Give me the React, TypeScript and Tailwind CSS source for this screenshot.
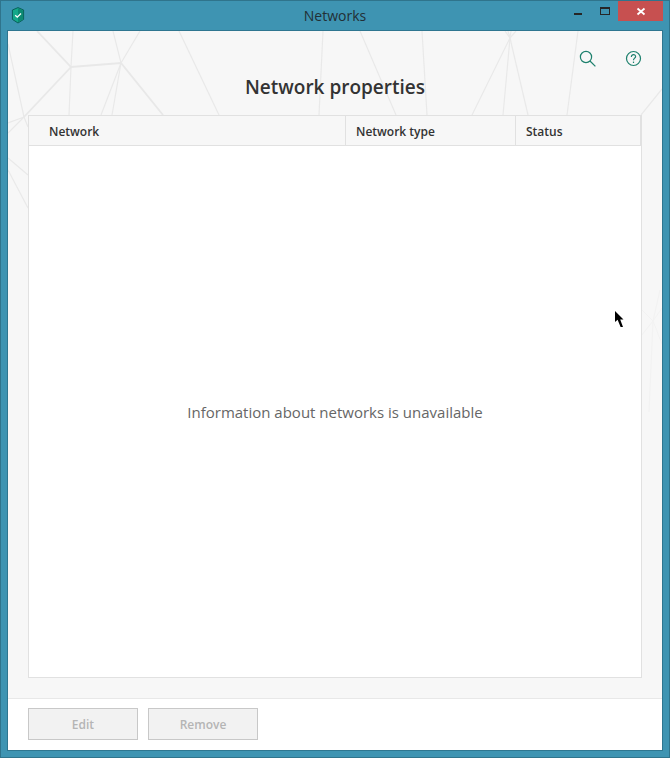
import React from 'react';

const thinLines = [
  'M65 0 L63 36 L61 84',
  'M105 0 L113 32 L132 0',
  'M93 84 L113 32 L104 84',
  'M171 0 L211 84',
  'M0 13 L16 86 L20 96',
  'M0 102 L16 86 L0 92',
  'M0 127 L20 144',
  'M0 139 L20 177',
  'M315 0 L311 84',
  'M352 0 L388 84',
  'M414 0 L419 84',
  'M497 0 L502 7 L508 0',
  'M500 0 L502 7 L503 0',
  'M464 84 L502 7 L495 84',
  'M502 7 L520 84',
  'M570 0 L559 84',
  'M654 58 L633 84',
];

const thickLines = ['M29 0 L63 36 L113 32 L155 84', 'M63 36 L16 86'];

const faintLines = ['M652 259 L645 290 L641 381', 'M633 278 L645 290 L654 277', 'M633 305 L645 290 L654 313'];

const Backdrop = () => (
  <svg
    className="absolute inset-0 h-full w-full"
    viewBox="0 0 654 667"
    preserveAspectRatio="xMinYMin slice"
    fill="none"
    aria-hidden="true"
  >
    <g stroke="#e9e9e9" strokeWidth="1.2">
      {thinLines.map((d) => (
        <path key={d} d={d} />
      ))}
    </g>
    <g stroke="#e8e8e8" strokeWidth="1.8">
      {thickLines.map((d) => (
        <path key={d} d={d} />
      ))}
    </g>
    <g stroke="#f2f2f2">
      {faintLines.map((d) => (
        <path key={d} d={d} />
      ))}
    </g>
  </svg>
);

const TitleBar = () => (
  <header className="grid h-[29px] grid-cols-[1fr_auto_1fr] items-start">
    <svg className="ml-[10px] mt-[6px]" width="14" height="17" viewBox="0 0 14 17" aria-hidden="true">
      <path d="M7 .6 L12.6 3 V12.4 L7 16 L1.4 12.4 V3 Z" fill="#14a88a" stroke="#0a5f5a" />
      <path d="M7 1.2 L12.1 3.4 V12.1 L7 15.4 Z" fill="#0c8a73" />
      <path d="M4.2 8.2 L6.3 10.2 L10 6.5" fill="none" stroke="#fff" strokeWidth="1.3" />
    </svg>
    <h2 className="pt-1 text-[14px] leading-[21px] text-[#222f35]">Networks</h2>
    <div className="mr-[6px] flex justify-end">
      <button type="button" aria-label="Minimize" className="h-5 w-[26px]">
        <svg width="26" height="20" shapeRendering="crispEdges">
          <path d="M8 12h8v2H8z" fill="#262626" />
        </svg>
      </button>
      <button type="button" aria-label="Maximize" className="h-5 w-[26px]">
        <svg width="26" height="20" shapeRendering="crispEdges">
          <path fillRule="evenodd" d="M8 6h10v8H8z M9 8v5h8V8z" fill="#262626" />
        </svg>
      </button>
      <button type="button" aria-label="Close" className="h-5 w-[45px] bg-[#c75050]">
        <svg width="45" height="20">
          <path d="M19.5 7.5 L26.5 13.5 M26.5 7.5 L19.5 13.5" stroke="#fff" strokeWidth="1.8" />
        </svg>
      </button>
    </div>
  </header>
);

const Toolbar = () => (
  <div className="flex h-11 items-end justify-end gap-7 pr-5 pb-[7px]">
    <button type="button" aria-label="Search" className="text-[#1d806d]">
      <svg width="18" height="18" viewBox="0 0 18 18" fill="none" stroke="currentColor" strokeWidth="1.2">
        <circle cx="8" cy="7" r="5.6" />
        <path d="M12 11 L17.4 16.4" />
      </svg>
    </button>
    <button type="button" aria-label="Help" className="text-[#1d806d]">
      <svg width="18" height="18" viewBox="0 0 18 18" fill="none" stroke="currentColor" strokeWidth="1.2">
        <circle cx="9.5" cy="8.5" r="7" />
        <path d="M7.4 7 C7.2 3.8 11.8 4 11.6 6.6 C11.5 8.2 9.5 8.2 9.5 10.3" />
        <path d="M9.5 11.6v1.4" />
      </svg>
    </button>
  </div>
);

const NetworkTable = () => (
  <div className="flex flex-1 flex-col border border-[#e1e1e1] bg-white">
    <table className="w-full table-fixed border-separate border-spacing-0 text-left text-[12px] leading-4 text-[#333]">
      <colgroup>
        <col />
        <col className="w-[170px]" />
        <col className="w-[125px]" />
      </colgroup>
      <thead>
        <tr className="h-[30px] bg-[#f7f7f7]">
          <th scope="col" className="border-r border-b border-[#e1e1e1] pt-[2px] pl-5 font-semibold">Network</th>
          <th scope="col" className="border-r border-b border-[#e1e1e1] pt-[2px] pl-[10px] font-semibold">Network type</th>
          <th scope="col" className="border-r border-b border-[#e1e1e1] pt-[2px] pl-[10px] font-semibold">Status</th>
        </tr>
      </thead>
    </table>
    <div className="flex flex-1 items-center justify-center">
      <p className="text-[15px] leading-5 text-[#666]">Information about networks is unavailable</p>
    </div>
  </div>
);

const footerButton =
  'h-8 w-[110px] border border-[#c8c8c8] bg-[#f2f2f2] pt-[2px] text-[12px] leading-4 font-semibold text-[#b5b5b5]';

const MousePointer = () => (
  <svg className="absolute top-[310px] left-[614px]" width="10" height="17" viewBox="0 0 10 17" aria-hidden="true">
    <path d="M0 0 V11 L2.6 8.8 L5.6 16 H8 L5.2 8.4 H8.5 Z" fill="#000" />
  </svg>
);

const App = () => {
  return (
    <div className="relative flex min-h-screen flex-col border border-[#2f748c] bg-[#3e94b2] font-['Open_Sans','Noto_Sans',sans-serif]">
      <TitleBar />
      <div className="mx-[6px] mb-[6px] flex flex-1 flex-col border border-[#2e7690] bg-white">
        <main className="relative flex flex-1 flex-col bg-[#f7f7f7]">
          <Backdrop />
          <div className="relative flex flex-1 flex-col">
            <Toolbar />
            <h1 className="mb-4 text-center text-[19px] leading-6 font-semibold text-[#333]">
              Network properties
            </h1>
            <div className="flex flex-1 flex-col px-5 pb-5">
              <NetworkTable />
            </div>
          </div>
        </main>
        <footer className="flex gap-[10px] border-t border-[#e8e8e8] px-5 pt-[9px] pb-[10px]">
          <button type="button" disabled className={footerButton}>Edit</button>
          <button type="button" disabled className={footerButton}>Remove</button>
        </footer>
      </div>
      <MousePointer />
    </div>
  );
};

export default App;
